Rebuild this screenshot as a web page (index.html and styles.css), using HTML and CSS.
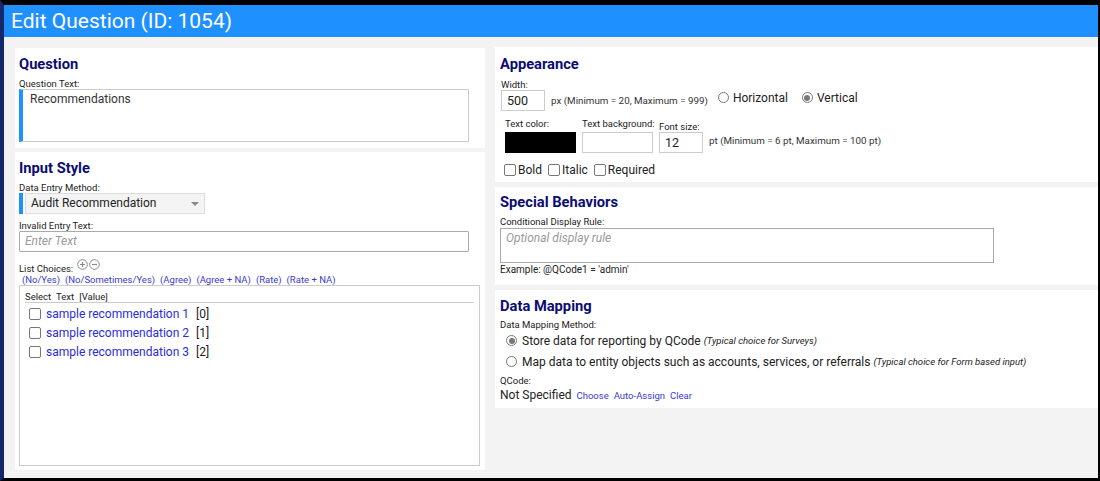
FILE: index.html
```html
<!DOCTYPE html>
<html lang="en">
<head>
    <meta charset="UTF-8">
    <title>Edit Question</title>
    <link rel="stylesheet" href="styles.css">
</head>
<body>
<div class="frame">
    <div class="titlebar">Edit Question (ID: 1054)</div>

    <div class="content">
        <!-- left column -->
        <div class="col col-left">
            <section class="panel panel-question">
                <h2>Question</h2>
                <div class="lbl">Question Text:</div>
                <div class="textbox required">Recommendations</div>
            </section>

            <section class="panel panel-input">
                <h2>Input Style</h2>
                <div class="lbl">Data Entry Method:</div>
                <div class="select-wrap">
                    <div class="select">Audit Recommendation<span class="caret"></span></div>
                </div>
                <div class="lbl lbl-gap">Invalid Entry Text:</div>
                <div class="input-line placeholder">Enter Text</div>
                <div class="lbl list-label">List Choices:
                    <svg class="round-btn" width="11" height="11" viewBox="0 0 11 11"><circle cx="5.5" cy="5.5" r="4.8" fill="none" stroke="#8a8a8a" stroke-width="1"/><path d="M3 5.5h5M5.5 3v5" stroke="#8a8a8a" stroke-width="1.2"/></svg><svg class="round-btn" width="11" height="11" viewBox="0 0 11 11"><circle cx="5.5" cy="5.5" r="4.8" fill="none" stroke="#8a8a8a" stroke-width="1"/><path d="M3 5.5h5" stroke="#8a8a8a" stroke-width="1.2"/></svg>
                </div>
                <div class="presets">
                    <a>(No/Yes)</a>
                    <a>(No/Sometimes/Yes)</a>
                    <a>(Agree)</a>
                    <a>(Agree + NA)</a>
                    <a>(Rate)</a>
                    <a>(Rate + NA)</a>
                </div>
                <div class="listbox">
                    <div class="list-head"><span>Select</span><span>Text</span><span>[Value]</span></div>
                    <div class="list-rows">
                        <div class="list-row"><span class="check"></span><a>sample recommendation 1</a><span class="val">[0]</span></div>
                        <div class="list-row"><span class="check"></span><a>sample recommendation 2</a><span class="val">[1]</span></div>
                        <div class="list-row"><span class="check"></span><a>sample recommendation 3</a><span class="val">[2]</span></div>
                    </div>
                </div>
            </section>
        </div>

        <!-- right column -->
        <div class="col col-right">
            <section class="panel panel-appearance">
                <h2>Appearance</h2>
                <div class="lbl lbl-width">Width:</div>
                <div class="width-row">
                    <div class="input-small">500</div>
                    <span class="hint">px (Minimum = 20, Maximum = 999)</span>
                    <div class="orient">
                        <span class="radio"></span><span class="opt">Horizontal</span>
                        <span class="radio checked"></span><span class="opt">Vertical</span>
                    </div>
                </div>
                <div class="style-row">
                    <div class="group">
                        <div class="lbl">Text color:</div>
                        <div class="swatch swatch-black"></div>
                    </div>
                    <div class="group">
                        <div class="lbl">Text background:</div>
                        <div class="swatch"></div>
                    </div>
                    <div class="group group-font">
                        <div class="lbl">Font size:</div>
                        <div class="input-small">12</div>
                    </div>
                    <span class="hint hint-pt">pt (Minimum = 6 pt, Maximum = 100 pt)</span>
                </div>
                <div class="flags">
                    <span class="check"></span><span class="flag">Bold</span>
                    <span class="check"></span><span class="flag">Italic</span>
                    <span class="check"></span><span class="flag">Required</span>
                </div>
            </section>

            <section class="panel panel-special">
                <h2>Special Behaviors</h2>
                <div class="lbl">Conditional Display Rule:</div>
                <div class="rule-box placeholder">Optional display rule</div>
                <div class="lbl example">Example: @QCode1 = 'admin'</div>
            </section>

            <section class="panel panel-mapping">
                <h2>Data Mapping</h2>
                <div class="lbl">Data Mapping Method:</div>
                <div class="map-opt"><span class="radio checked"></span>Store data for reporting by QCode <i>(Typical choice for Surveys)</i></div>
                <div class="map-opt"><span class="radio"></span>Map data to entity objects such as accounts, services, or referrals <i>(Typical choice for Form based input)</i></div>
                <div class="lbl qcode-lbl">QCode:</div>
                <div class="qcode">Not Specified <a>Choose</a> <a>Auto-Assign</a> <a>Clear</a></div>
            </section>
        </div>
    </div>
</div>
</body>
</html>
```

FILE: styles.css
```css
body {
    margin: 0;
    background-color: #000;
    font-family: Roboto, "Liberation Sans", sans-serif;
    color: #222;
}
.frame {
    height: 481px;
    box-sizing: border-box;
    border-top: 5px solid #000;
    border-left: 4px solid #13286a;
    border-right: 2px solid #000;
    border-bottom: 3px solid #000;
    background-color: #f3f3f3;
    display: flex;
    flex-direction: column;
}
.titlebar {
    background-color: #1e90ff;
    color: #fff;
    height: 32px;
    line-height: 32px;
    font-size: 21px;
    padding-left: 7px;
}
.content {
    flex: 1;
    display: flex;
    gap: 10px;
    padding: 11px 0 8px 11px;
}
.col {
    display: flex;
    flex-direction: column;
}
.col-left {
    width: 470px;
    gap: 4px;
}
.col-right {
    flex: 1;
    gap: 5px;
    margin-top: -1px;
}
.panel {
    background-color: #fff;
    padding: 6px 5px;
}
h2 {
    margin: 0;
    font-size: 14.7px;
    line-height: 20px;
    font-weight: bold;
    color: #0c0c72;
}
.lbl {
    font-size: 9.5px;
    line-height: 11px;
    margin-top: 4px;
    color: #222;
    white-space: nowrap;
}
.placeholder {
    color: #9a9a9a;
    font-style: italic;
}
a {
    color: #3a3ad4;
    cursor: pointer;
}

/* Question */
.panel-question {
    padding-left: 4px;
}
.textbox {
    width: 450px;
    height: 53px;
    box-sizing: border-box;
    border: 1px solid #ccc;
    font-size: 12px;
    line-height: 16px;
    padding: 1px 7px;
    color: #333;
}
.textbox.required {
    border-left: 4px solid #1e90ff;
}

/* Input style */
.panel-input {
    flex: 1;
    display: flex;
    flex-direction: column;
    padding: 6px 5px 4px 4px;
}
.select-wrap {
    border-left: 4px solid #1e90ff;
    padding-left: 2px;
    height: 21px;
    width: 180px;
}
.select {
    height: 21px;
    box-sizing: border-box;
    background-color: #f4f4f4;
    border: 1px solid #ddd;
    font-size: 12px;
    line-height: 19px;
    padding-left: 5px;
    position: relative;
    color: #222;
}
.caret {
    position: absolute;
    right: 5px;
    top: 8px;
    border-left: 4px solid transparent;
    border-right: 4px solid transparent;
    border-top: 4px solid #888;
}
.lbl-gap {
    margin-top: 6px;
}
.input-line {
    width: 450px;
    height: 21px;
    box-sizing: border-box;
    border: 1px solid #aaa;
    border-radius: 1px;
    font-size: 12px;
    line-height: 19px;
    padding-left: 5px;
}
.list-label {
    margin-top: 7px;
    display: flex;
    align-items: flex-end;
    gap: 1px;
}
.list-label .round-btn {
    margin-bottom: 4px;
}
.list-label .round-btn:first-child {
    margin-left: 3px;
}
.presets {
    display: flex;
    gap: 5px;
    padding-left: 3px;
    font-size: 9.5px;
    line-height: 11px;
}
.listbox {
    flex: 1;
    border: 1px solid #ccc;
    padding: 5px 5px 0 5px;
}
.list-head {
    display: flex;
    gap: 5px;
    font-size: 9.5px;
    line-height: 11px;
    border-bottom: 1px solid #ccc;
}
.list-rows {
    padding-top: 1px;
}
.list-row {
    display: flex;
    align-items: center;
    height: 19px;
    padding-left: 4px;
    font-size: 12px;
}
.list-row a {
    color: #2b2be0;
}
.list-row .val {
    margin-left: 7px;
    color: #222;
}
.check {
    display: inline-block;
    width: 10px;
    height: 10px;
    border: 1px solid #777;
    border-radius: 2px;
    background-color: #fff;
    margin-right: 5px;
    flex: none;
}

/* Appearance */
.panel-appearance {
    padding: 7px 5px 4px 5px;
}
.lbl-width {
    margin-top: 5px;
    padding-left: 1px;
}
.width-row {
    display: flex;
    align-items: center;
    height: 21px;
    padding-left: 1px;
}
.input-small {
    width: 44px;
    height: 21px;
    box-sizing: border-box;
    border: 1px solid #ccc;
    font-size: 12.5px;
    line-height: 19px;
    padding-left: 5px;
    color: #222;
}
.hint {
    font-size: 9.8px;
    line-height: 12px;
    margin-left: 6px;
    color: #333;
    white-space: nowrap;
}
.orient {
    display: flex;
    align-items: center;
    margin-left: 10px;
    margin-bottom: 6px;
    font-size: 12px;
    line-height: 14px;
}
.opt {
    margin-left: 4px;
    margin-right: 14px;
}
.radio {
    display: inline-block;
    width: 9px;
    height: 9px;
    border: 1px solid #777;
    border-radius: 50%;
    background-color: #fff;
    position: relative;
    flex: none;
}
.radio.checked::after {
    content: "";
    position: absolute;
    left: 1.5px;
    top: 1.5px;
    width: 6px;
    height: 6px;
    border-radius: 50%;
    background-color: #777;
}
.style-row {
    display: flex;
    align-items: flex-end;
    gap: 6px;
    margin-top: 7px;
    padding-left: 5px;
    height: 35px;
}
.group {
    width: 71px;
}
.group .lbl {
    margin: 0 0 3px 0;
}
.group-font {
    width: 44px;
}
.group-font .lbl {
    margin: 0;
}
.swatch {
    width: 71px;
    height: 21px;
    box-sizing: border-box;
    border: 1px solid #ccc;
}
.swatch-black {
    background-color: #000;
    border-color: #000;
}
.hint-pt {
    margin-left: 0;
    margin-bottom: 6px;
}
.flags {
    display: flex;
    align-items: center;
    margin-top: 9px;
    padding-left: 4px;
    font-size: 12px;
    line-height: 16px;
}
.flags .check {
    margin-right: 2px;
}
.flag {
    margin-right: 6px;
}

/* Special behaviors */
.panel-special {
    padding: 5px 5px 10px 5px;
}
.rule-box {
    width: 494px;
    height: 35px;
    box-sizing: border-box;
    border: 1px solid #aaa;
    font-size: 12px;
    line-height: 16px;
    padding: 1px 5px;
    margin-top: 1px;
}
.example {
    font-size: 10px;
    margin-top: 1px;
}

/* Data mapping */
.panel-mapping {
    padding: 6px 5px 4px 5px;
}
.panel-mapping .lbl {
    margin-top: 3px;
}
.map-opt {
    display: flex;
    align-items: center;
    height: 21px;
    padding-left: 6px;
    font-size: 12px;
    white-space: nowrap;
}
.map-opt .radio {
    margin-right: 5px;
}
.map-opt i {
    font-size: 9.5px;
    margin-left: 3px;
}
.panel-mapping .qcode-lbl {
    margin-top: 3px;
}
.qcode {
    font-size: 12px;
    line-height: 16px;
    margin-top: 1px;
}
.qcode a {
    font-size: 9.5px;
    margin-left: 2px;
}
```
